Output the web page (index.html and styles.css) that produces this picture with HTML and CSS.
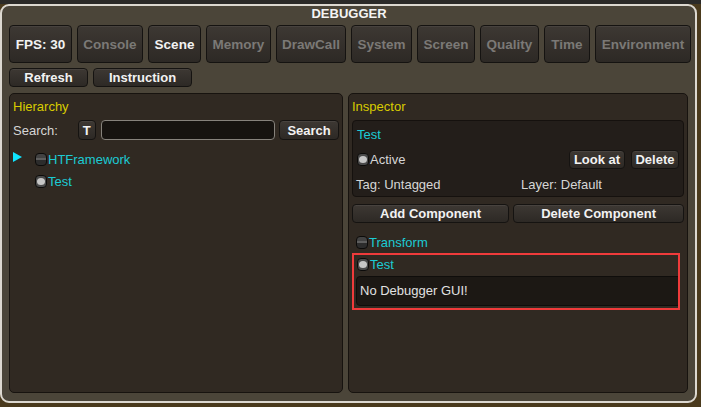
FILE: index.html
```html
<!DOCTYPE html>
<html>
<head>
<meta charset="utf-8">
<link rel="stylesheet" href="styles.css">
</head>
<body>
<div class="window">
  <div class="title">DEBUGGER</div>
  <div class="tabs">
    <div class="btn tab w-fps">FPS: 30</div>
    <div class="btn tab off w-console">Console</div>
    <div class="btn tab w-scene">Scene</div>
    <div class="btn tab off w-memory">Memory</div>
    <div class="btn tab off w-drawcall">DrawCall</div>
    <div class="btn tab off w-system">System</div>
    <div class="btn tab off w-screen">Screen</div>
    <div class="btn tab off w-quality">Quality</div>
    <div class="btn tab off w-time">Time</div>
    <div class="btn tab off w-env">Environment</div>
  </div>
  <div class="tools">
    <div class="btn small w-refresh">Refresh</div>
    <div class="btn small w-instr">Instruction</div>
  </div>
  <div class="panels">
    <div class="panel">
      <div class="heading">Hierarchy</div>
      <div class="search-row">
        <span class="search-label">Search:</span>
        <div class="btn small w-t">T</div>
        <div class="input"></div>
        <div class="btn small w-search">Search</div>
      </div>
      <div class="tree">
        <div class="tree-row">
          <span class="arrow"></span>
          <span class="chk"></span>
          <span class="cyan">HTFramework</span>
        </div>
        <div class="tree-row">
          <span class="arrow blank"></span>
          <span class="chk on"></span>
          <span class="cyan">Test</span>
        </div>
      </div>
    </div>
    <div class="panel">
      <div class="heading">Inspector</div>
      <div class="obj-box">
        <div class="obj-name cyan">Test</div>
        <div class="obj-row">
          <span class="chk on"></span>
          <span class="label">Active</span>
          <span class="spacer"></span>
          <div class="btn small w-look">Look at</div>
          <div class="btn small w-del">Delete</div>
        </div>
        <div class="obj-meta">
          <span class="tag">Tag: Untagged</span>
          <span class="label">Layer: Default</span>
        </div>
      </div>
      <div class="comp-btns">
        <div class="btn small grow">Add Component</div>
        <div class="btn small grow">Delete Component</div>
      </div>
      <div class="comp-row first">
        <span class="chk"></span>
        <span class="cyan">Transform</span>
      </div>
      <div class="highlight">
        <div class="comp-row">
          <span class="chk on"></span>
          <span class="cyan">Test</span>
        </div>
        <div class="gui-box">No Debugger GUI!</div>
      </div>
    </div>
  </div>
</div>
</body>
</html>
```

FILE: styles.css
```css
* { box-sizing: border-box; }
html, body { margin: 0; padding: 0; }
body {
  width: 701px;
  height: 407px;
  overflow: hidden;
  background: linear-gradient(#2b2a28 0 4px, #4a3a1d 4px);
  font-family: "Liberation Sans", Arial, sans-serif;
  font-size: 13px;
  color: #d6d6d6;
}
.window {
  margin-top: 4px;
  width: 697px;
  height: 399px;
  border: 2px solid #dcd8d0;
  border-radius: 9px;
  background: #4b4539;
  padding: 0 6px 0 7px;
  display: flex;
  flex-direction: column;
}
.title {
  height: 19px;
  line-height: 16px;
  text-align: center;
  font-weight: bold;
  color: #f4f4f4;
  font-size: 13px;
}
.btn {
  display: flex;
  align-items: center;
  justify-content: center;
  background: linear-gradient(#3d3833, #2d2925);
  border: 1px solid #151311;
  border-radius: 4px;
  box-shadow: inset 0 1px 0 rgba(255,255,255,0.06);
  color: #f2f2f2;
  font-weight: bold;
  font-size: 13px;
  white-space: nowrap;
}
.tabs {
  display: flex;
  gap: 5px;
  height: 38px;
}
.tab { flex: none; font-size: 13.5px; }
.tab.off { color: #7b7976; }
.w-fps { width: 63px; }
.w-console { width: 66px; }
.w-scene { width: 53px; }
.w-memory { width: 65px; }
.w-drawcall { width: 70px; }
.w-system { width: 61px; }
.w-screen { width: 58px; }
.w-quality { width: 59px; }
.w-time { width: 46px; }
.w-env { width: 96px; }
.tools {
  display: flex;
  gap: 5px;
  margin-top: 5px;
  height: 19px;
}
.small { height: 19px; }
.w-refresh { width: 79px; }
.w-instr { width: 99px; }
.w-t { width: 18px; }
.w-search { width: 60px; }
.w-look { width: 56px; }
.w-del { width: 48px; }
.panels {
  display: grid;
  grid-template-columns: 334px 1fr;
  gap: 5px;
  margin-top: 6px;
  height: 300px;
  margin-right: 1px;
}
.panel {
  background: #302922;
  border: 1px solid #17130f;
  border-radius: 5px;
  padding: 5px 3px 0 3px;
  display: flex;
  flex-direction: column;
}
.heading {
  color: #d8cc00;
  line-height: 15px;
  height: 15px;
}
.search-row {
  display: flex;
  align-items: center;
  margin-top: 6px;
  height: 20px;
}
.search-row .btn { height: 20px; }
.search-label { width: 65px; }
.input {
  margin: 0 4px 0 5px;
  width: 175px;
  height: 20px;
  background: #161310;
  border: 1px solid #86827c;
  border-radius: 4px;
}
.tree { margin-top: 8px; }
.tree-row {
  display: flex;
  align-items: center;
  height: 22px;
}
.arrow {
  width: 0; height: 0;
  border-left: 9px solid #10e4ff;
  border-top: 5px solid transparent;
  border-bottom: 5px solid transparent;
  margin-right: 13px;
  margin-top: -4px;
}
.arrow.blank { border-left-color: transparent; }
.cyan { color: #1ccbd4; }
.chk {
  position: relative;
  width: 12px;
  height: 13px;
  border: 1px solid #0c0b0a;
  border-radius: 4px;
  background: linear-gradient(#424242 0 40%, #5e5e5e 40% 58%, #2c2c2c 58%);
  margin-right: 1px;
  flex: none;
}
.chk.on { background: #4a4a4a; }
.chk.on::after {
  content: "";
  position: absolute;
  left: 1px; top: 2px;
  width: 8px; height: 7px;
  border-radius: 50%;
  background: #c6c6c6;
}
.obj-box {
  margin-top: 6px;
  height: 77px;
  background: #231e1a;
  border: 1px solid #15110e;
  border-radius: 4px;
  padding: 6px 4px 0 4px;
}
.obj-name { line-height: 15px; }
.obj-row {
  display: flex;
  align-items: center;
  margin-top: 8px;
  height: 19px;
}
.obj-row .w-del { margin-left: 6px; }
.spacer { flex: 1; }
.obj-meta {
  display: flex;
  margin-top: 8px;
  line-height: 15px;
}
.tag { width: 165px; margin-left: -1px; }
.comp-btns {
  display: flex;
  gap: 4px;
  margin-top: 7px;
}
.grow { flex: 1 1 auto; }
.comp-row {
  display: flex;
  align-items: center;
  height: 16px;
  padding-left: 4px;
}
.comp-row.first { margin-top: 11px; }
.highlight {
  margin-top: 3px;
  width: 328px;
  height: 57px;
  border: 2px solid #ef3b3b;
  padding: 1px 0 0 1px;
  overflow: hidden;
}
.highlight .comp-row { padding-left: 2px; height: 16px; }
.gui-box {
  margin-top: 4px;
  margin-left: 1px;
  width: 340px;
  height: 30px;
  background: #1c1814;
  border: 1px solid #0f0d0b;
  border-radius: 4px;
  padding-left: 3px;
  line-height: 28px;
  color: #e2e2e2;
}
```
